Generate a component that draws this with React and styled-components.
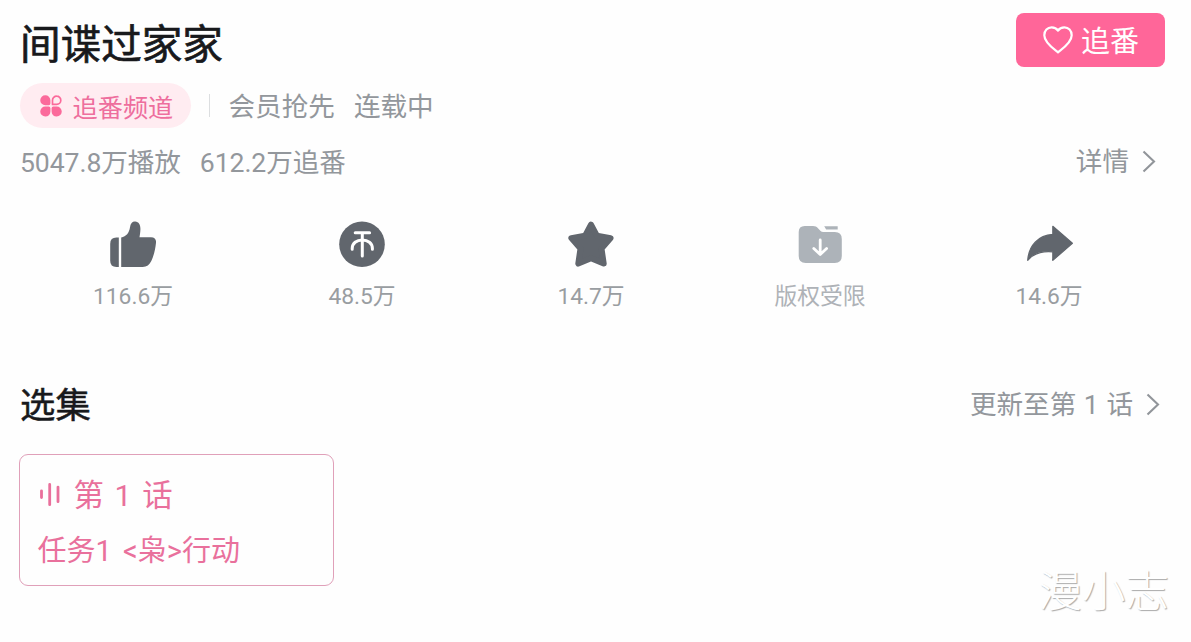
import React from "react";
import styled, { createGlobalStyle } from "styled-components";

const actions = [
  { icon: "like", label: "116.6万" },
  { icon: "coin", label: "48.5万" },
  { icon: "star", label: "14.7万" },
  { icon: "download", label: "版权受限", disabled: true },
  { icon: "share", label: "14.6万" },
];

const ActionIcon = ({ name }) => {
  switch (name) {
    case "like":
      return (
        <svg width="50" height="50" viewBox="0 0 50 50" fill="currentColor">
          <path d="M10.8 17.5V47H8.4Q2.2 47 2.2 40.8V23.7Q2.2 17.5 8.4 17.5Z" />
          <path d="M13.2 47V17.6C18.2 16.4 21.2 12.9 22 7.2C22.5 3.3 24.4 1.3 27.2 1.5C31 1.8 32.6 5 32.4 9.6C32.3 12.6 31.9 15.1 31.5 17.2H43C46.6 17.2 48.4 19.3 48 22.7C47.3 29.6 45.6 36.1 43.3 41.1C41.4 45.1 38.8 47 34.7 47Z" />
        </svg>
      );
    case "coin":
      return (
        <svg width="50" height="50" viewBox="0 0 50 50" fill="none">
          <circle cx="25" cy="24.3" r="22.8" fill="currentColor" />
          <g stroke="#fff" strokeWidth="3" strokeLinecap="round">
            <path d="M18.2 12.8H32.6M25.3 12.8V36" />
            <path d="M15.2 29.2V28.4C15.2 23.4 19.6 19.9 25.3 19.9S35.4 23.4 35.4 28.4V29.2" />
          </g>
        </svg>
      );
    case "star":
      return (
        <svg width="50" height="50" viewBox="0 0 50 50">
          <path
            d="M25 4.6L31 15.8L44.6 18.1L35.5 28.6L37.7 43.6L25 38.2L12.3 43.6L14.5 28.6L5.4 18.1L19 15.8Z"
            fill="currentColor"
            stroke="currentColor"
            strokeWidth="6"
            strokeLinejoin="round"
          />
        </svg>
      );
    case "download":
      return (
        <svg width="50" height="50" viewBox="0 0 50 50" fill="currentColor">
          <path d="M9.7 6.1H18C20.3 6.1 21.6 6.8 23.2 8.5L25.6 11Q26.6 12 28.2 12H39.8Q46.8 12 46.8 19V36Q46.8 43 39.8 43H10.7Q3.7 43 3.7 36V12.1Q3.7 6.1 9.7 6.1Z" />
          <path d="M29.2 6.2H42.7V9.5H31.2Z" />
          <path
            d="M25.2 20V34M18.8 28.4L25.2 34.5L31.6 28.4"
            fill="none"
            stroke="#fff"
            strokeWidth="2.8"
            strokeLinecap="round"
            strokeLinejoin="round"
          />
        </svg>
      );
    default:
      return (
        <svg width="50" height="50" viewBox="0 0 50 50">
          <path
            d="M28.8 6.3L48.4 23.3L28.8 40.4V31.8C17.5 30.7 10.1 32.8 3.7 40.3C4.8 25.5 14.2 15.2 28.8 14.4Z"
            fill="currentColor"
            stroke="currentColor"
            strokeWidth="1.2"
            strokeLinejoin="round"
          />
        </svg>
      );
  }
};

const Arrow = () => (
  <svg width="14" height="24" viewBox="0 0 14 24" fill="none">
    <path d="M1.5 1.5L12 11.5L1.5 21.5" stroke="#91959a" strokeWidth="2.1" />
  </svg>
);

export default function App() {
  return (
    <>
      <GlobalStyle />
      <Page>
        <Header>
          <Title>间谍过家家</Title>
          <FollowBtn>
            <svg width="32" height="30" viewBox="0 0 32 30" fill="none">
              <path
                d="M16 27.3C12.2 24.1 2.3 17.8 2.3 10.2C2.3 5.7 5.5 2.4 9.6 2.4C12.4 2.4 14.7 3.6 16 5.6C17.3 3.6 19.6 2.4 22.4 2.4C26.5 2.4 29.7 5.7 29.7 10.2C29.7 17.8 19.8 24.1 16 27.3Z"
                stroke="#fff"
                strokeWidth="2.2"
                strokeLinejoin="round"
              />
            </svg>
            <span>追番</span>
          </FollowBtn>
        </Header>
        <TagRow>
          <Channel>
            <svg width="22" height="22" viewBox="0 0 22 22" fill="#fb6a9b">
              <path d="M5.3.2A5 5 0 0 1 10.4 5.2V8.6Q10.4 10.3 8.7 10.3H5.3A5 5 0 0 1 5.3.2Z" />
              <path d="M5.3 21.6A5 5 0 0 0 10.4 16.6V13.2Q10.4 11.5 8.7 11.5H5.3A5 5 0 0 0 5.3 21.6Z" />
              <path d="M16.7 21.6A5 5 0 0 1 11.6 16.6V13.2Q11.6 11.5 13.3 11.5H16.7A5 5 0 0 1 16.7 21.6Z" />
              <path
                d="M16.7 1.2A4.1 4.1 0 0 0 12.5 5.3V9.4H16.7A4.1 4.1 0 0 0 16.7 1.2Z"
                fill="none"
                stroke="#fb6a9b"
                strokeWidth="1.7"
                strokeLinejoin="round"
              />
            </svg>
            追番频道
          </Channel>
          <Divider />
          <Meta>会员抢先</Meta>
          <Meta>连载中</Meta>
        </TagRow>
        <StatRow>
          <Meta>5047.8万播放</Meta>
          <Meta>612.2万追番</Meta>
          <MoreLink $right={9}>
            详情
            <Arrow />
          </MoreLink>
        </StatRow>
        <ActionBar>
          {actions.map((item) => (
            <Action key={item.icon} $disabled={item.disabled}>
              <ActionIcon name={item.icon} />
              <span>{item.label}</span>
            </Action>
          ))}
        </ActionBar>
        <SectionHead>
          <SectionTitle>选集</SectionTitle>
          <MoreLink $right={5}>
            更新至第 1 话
            <Arrow />
          </MoreLink>
        </SectionHead>
        <Episode>
          <EpisodeNo>
            <svg width="22" height="26" viewBox="0 0 22 26">
              <path
                d="M2.5 7.8V14.6M10.7 1.5V21.7M19 4.1V18.7"
                stroke="#e9709c"
                strokeWidth="2.8"
                strokeLinecap="round"
              />
            </svg>
            第 1 话
          </EpisodeNo>
          <EpisodeName>任务1 &lt;枭&gt;行动</EpisodeName>
        </Episode>
        <Watermark>漫小志</Watermark>
      </Page>
    </>
  );
}

const GlobalStyle = createGlobalStyle`
  * {
    box-sizing: border-box;
  }
  body {
    margin: 0;
    background-color: #fefefe;
    font-family: Roboto, "Noto Sans CJK SC", sans-serif;
  }
  svg {
    flex-shrink: 0;
  }
`;

const Page = styled.div`
  position: relative;
  display: flex;
  flex-direction: column;
  width: 1191px;
  height: 642px;
  padding: 13px 26px 0 20px;
  overflow: hidden;
  white-space: nowrap;
`;

const Header = styled.div`
  display: flex;
  justify-content: space-between;
  height: 54px;
`;

const Title = styled.h1`
  margin: 5px 0 0;
  font-size: 40.6px;
  line-height: 54px;
  font-weight: 400;
  color: #18191c;
  -webkit-text-stroke: 0.7px #18191c;
`;

const FollowBtn = styled.button`
  display: flex;
  align-items: center;
  gap: 7px;
  width: 149px;
  height: 54px;
  padding: 0 0 0 26px;
  border: none;
  border-radius: 8px;
  background-color: #ff6699;
  color: #fff;
  font-family: inherit;
  font-size: 29px;
  line-height: 54px;
  & > span {
    padding-top: 4px;
  }
`;

const TagRow = styled.div`
  display: flex;
  align-items: center;
  height: 45px;
  margin-top: 16px;
  & > span {
    padding-top: 2px;
  }
  & > span + span {
    margin-left: 19px;
  }
`;

const Channel = styled.div`
  display: flex;
  align-items: center;
  gap: 11px;
  width: 171px;
  height: 45px;
  margin-left: -0.5px;
  padding-left: 20px;
  border-radius: 23px;
  background-color: #ffecf1;
  color: #ee6e9d;
  font-size: 25.2px;
`;

const Divider = styled.div`
  width: 1px;
  height: 23px;
  margin: 0 19px 0 18px;
  background-color: #dcdee0;
`;

const Meta = styled.span`
  color: #93979c;
  font-size: 26.6px;
  line-height: 40px;
`;

const StatRow = styled.div`
  display: flex;
  align-items: center;
  height: 40px;
  margin-top: 14px;
  & > span {
    padding-top: 2px;
    letter-spacing: -0.08px;
  }
  & > span + span {
    margin-left: 19px;
  }
`;

const MoreLink = styled.div`
  display: flex;
  align-items: center;
  gap: 13px;
  margin-left: auto;
  margin-right: ${(props) => props.$right}px;
  color: #93979c;
  font-size: 26.6px;
  line-height: 40px;
  word-spacing: 1px;
`;

const ActionBar = styled.div`
  display: grid;
  grid-template-columns: repeat(5, 229px);
  margin: 38px 0 0 -1.5px;
`;

const Action = styled.div`
  display: flex;
  flex-direction: column;
  align-items: center;
  color: ${(props) => (props.$disabled ? "#adb3b9" : "#61666d")};
  & > span {
    margin-top: 10px;
    color: ${(props) => (props.$disabled ? "#aeb2b7" : "#999da1")};
    font-size: 22.8px;
    line-height: 34px;
  }
`;

const SectionHead = styled.div`
  display: flex;
  align-items: center;
  justify-content: space-between;
  height: 50px;
  margin-top: 66px;
`;

const SectionTitle = styled.h2`
  margin: 0;
  padding-top: 2px;
  font-size: 35.4px;
  line-height: 50px;
  font-weight: 400;
  color: #18191c;
  -webkit-text-stroke: 0.5px #18191c;
`;

const Episode = styled.div`
  width: 315px;
  height: 132px;
  margin: 24px 0 0 -0.6px;
  padding: 20px 0 0 17px;
  border: 1px solid #e0a0b9;
  border-radius: 9px;
  color: #e9709c;
`;

const EpisodeNo = styled.div`
  display: flex;
  align-items: center;
  gap: 12px;
  padding-left: 2px;
  font-size: 30.4px;
  line-height: 42px;
  word-spacing: 3.2px;
`;

const EpisodeName = styled.div`
  margin-top: 14px;
  font-size: 29px;
  line-height: 40px;
  word-spacing: 4.2px;
`;

const Watermark = styled.div`
  position: absolute;
  right: 22px;
  bottom: 19px;
  color: #fff;
  font-size: 43.5px;
  font-weight: 300;
  line-height: 60px;
  text-shadow: 1px 1px 1px #aaa;
`;
